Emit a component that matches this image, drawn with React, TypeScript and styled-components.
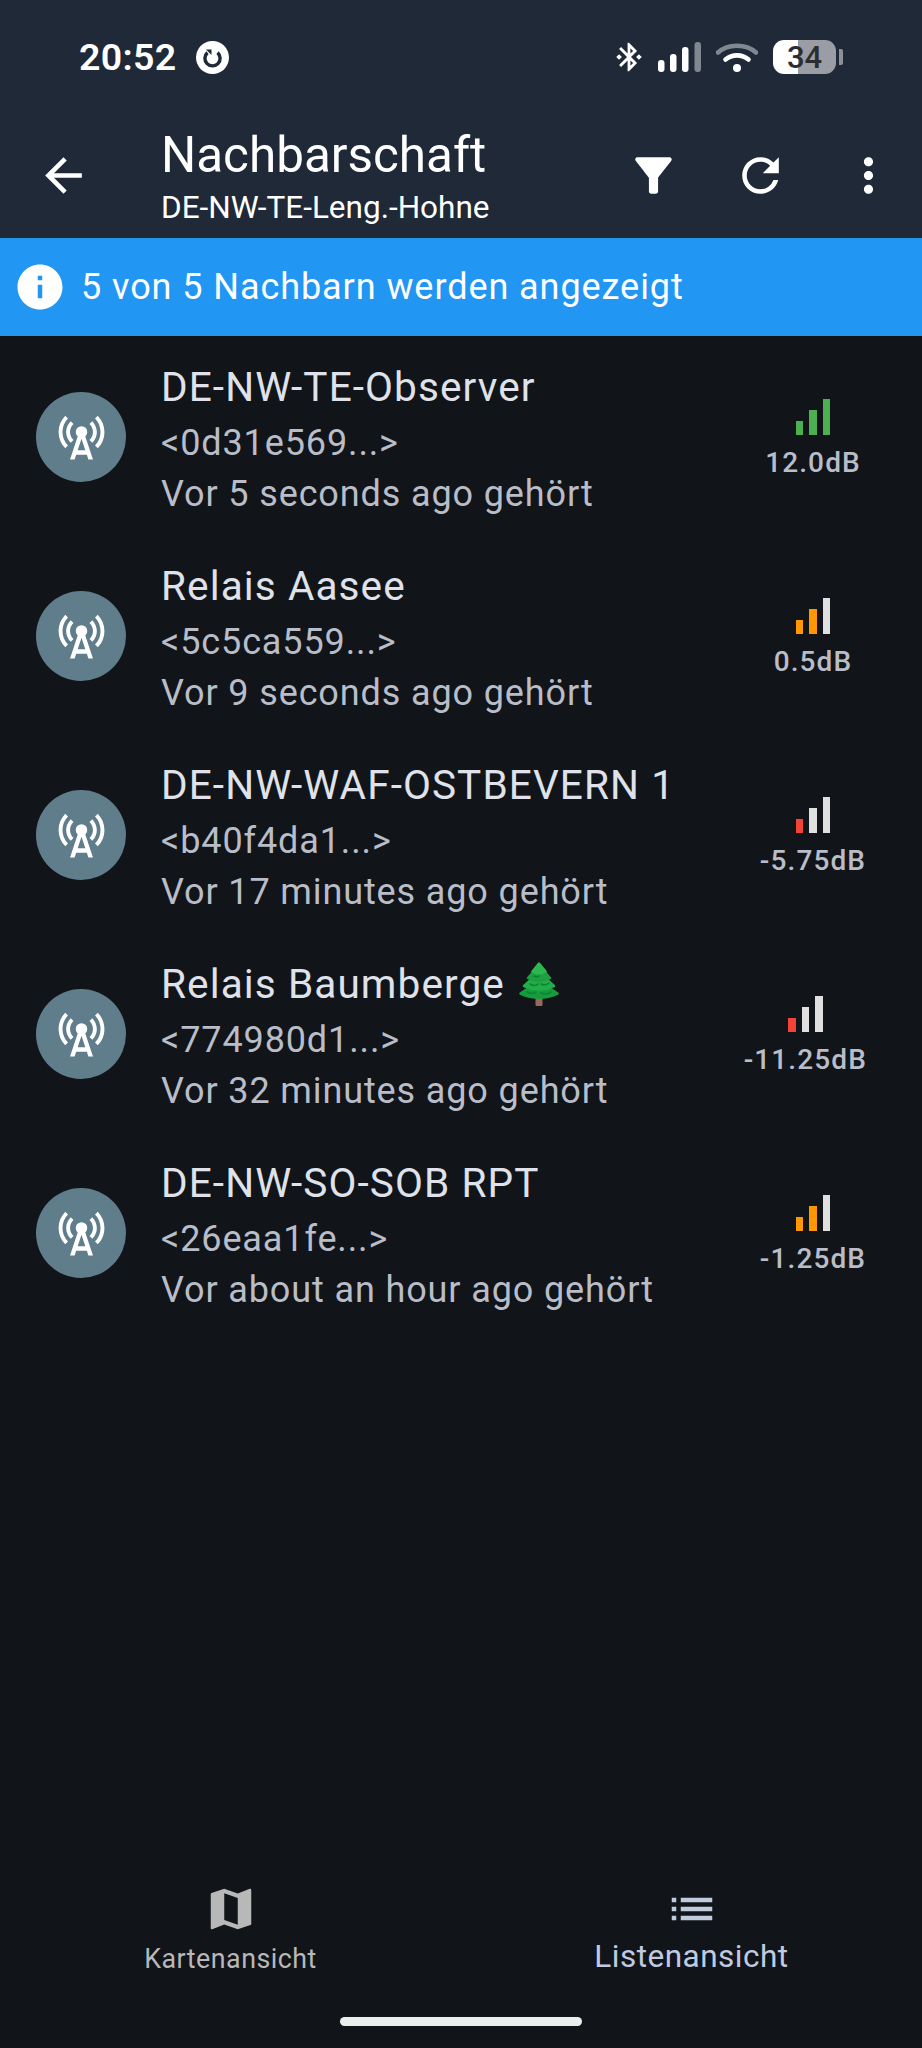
import React from "react";
import styled, { createGlobalStyle } from "styled-components";
import {
  MdArrowBack,
  MdBluetoothConnected,
  MdCellTower,
  MdFilterAlt,
  MdInfo,
  MdList,
  MdMap,
  MdMoreVert,
  MdRefresh,
} from "react-icons/md";

const GlobalStyle = createGlobalStyle`
  html, body { margin: 0; padding: 0; background: #111419; }
  body { font-family: Roboto, "Liberation Sans", sans-serif; }
`;

const Screen = styled.div`
  width: 922px;
  height: 2048px;
  display: flex;
  flex-direction: column;
  background: #111419;
  overflow: hidden;
`;

const Header = styled.header`
  height: 238px;
  background: #1f2937;
  display: flex;
  flex-direction: column;
  color: #fff;
`;

const StatusBar = styled.div`
  height: 112px;
  padding: 2px 79px 0;
  display: flex;
  align-items: center;
  justify-content: space-between;
  box-sizing: border-box;
`;

const StatusLeft = styled.div`
  display: flex;
  align-items: center;
  gap: 20px;
`;

const Clock = styled.span`
  font-size: 37.5px;
  font-weight: 600;
  letter-spacing: 0.3px;
`;

const StatusRight = styled.div`
  display: flex;
  align-items: center;
`;

const BluetoothGlyph = styled(MdBluetoothConnected)`
  font-size: 34px;
  margin-right: 12px;
`;

const Battery = styled.div`
  display: flex;
  align-items: center;
  margin-left: 15px;
`;

const BatteryBody = styled.div`
  width: 63px;
  height: 34px;
  border-radius: 11px;
  background: linear-gradient(to right, #fff 0 25px, #9a9da3 25px 100%);
  color: #2b2d31;
  font-size: 31px;
  font-weight: 500;
  display: flex;
  align-items: center;
  justify-content: center;
`;

const BatteryNub = styled.div`
  width: 4px;
  height: 16px;
  margin-left: 3px;
  background: #8d9197;
  border-radius: 0 2px 2px 0;
`;

const AppBar = styled.div`
  height: 126px;
  display: flex;
  align-items: flex-start;
`;

const BackSlot = styled.div`
  width: 126px;
  height: 126px;
  flex: none;
  display: flex;
  align-items: center;
  justify-content: center;
`;

const BackIcon = styled(MdArrowBack)`
  font-size: 55px;
`;

const Titles = styled.div`
  flex: 1;
  margin-left: 35px;
  display: flex;
  flex-direction: column;
`;

const Title = styled.div`
  font-size: 49.4px;
  line-height: 56px;
  margin-top: 15px;
`;

const Subtitle = styled.div`
  font-size: 31.5px;
  line-height: 36px;
  margin-top: 7px;
`;

const Actions = styled.div`
  display: flex;
  width: 322.5px;
  height: 126px;
  flex: none;
  align-items: center;
`;

const ActionSlot = styled.div`
  width: 107.5px;
  display: flex;
  justify-content: center;
`;

const Banner = styled.div`
  height: 98px;
  background: #2196f3;
  display: flex;
  align-items: center;
  color: #fff;
  padding-left: 13px;
  box-sizing: border-box;
`;

const BannerIcon = styled(MdInfo)`
  font-size: 54px;
  flex: none;
`;

const BannerText = styled.span`
  font-size: 36px;
  letter-spacing: 0.93px;
  margin-left: 14px;
`;

const List = styled.div`
  flex: 1;
  padding-top: 1px;
`;

const Row = styled.div`
  height: 199px;
  display: flex;
  align-items: center;
  padding: 0 55px 0 36px;
`;

const Avatar = styled.div`
  width: 90px;
  height: 90px;
  border-radius: 50%;
  background: #607d8b;
  color: #fff;
  flex: none;
  display: flex;
  align-items: center;
  justify-content: center;
`;

const RowText = styled.div`
  flex: 1;
  margin-left: 35px;
  display: flex;
  flex-direction: column;
  padding-top: 3px;
`;

const RowTitle = styled.div`
  font-size: 40.6px;
  line-height: 61px;
  letter-spacing: 1.08px;
  color: #dfe2ea;
  display: flex;
  align-items: center;
  gap: 14px;
`;

const RowLine = styled.div`
  font-size: 36px;
  line-height: 51px;
  letter-spacing: 0.88px;
  color: #b9bdc8;
`;

const SignalColumn = styled.div`
  min-width: 108px;
  flex: none;
  display: flex;
  flex-direction: column;
  align-items: center;
  margin-top: 5px;
`;

const Bars = styled.div`
  display: flex;
  align-items: flex-end;
  gap: 6px;
  height: 37px;
`;

const Bar = styled.div<{ $h: number; $color: string }>`
  width: 7.5px;
  height: ${(p) => p.$h}px;
  background: ${(p) => p.$color};
`;

const SignalLabel = styled.div`
  font-size: 28px;
  line-height: 34px;
  font-weight: 500;
  letter-spacing: 1.12px;
  color: #b9bdc8;
  margin-top: 11px;
  white-space: nowrap;
`;

const BottomNav = styled.nav`
  display: grid;
  grid-template-columns: 1fr 1fr;
  height: 130px;
`;

const NavItem = styled.div<{ $active?: boolean }>`
  display: flex;
  flex-direction: column;
  align-items: center;
  color: ${(p) => (p.$active ? "#c0cbe0" : "#b8b8b8")};
`;

const NavLabel = styled.span<{ $active?: boolean }>`
  font-size: ${(p) => (p.$active ? 31.5 : 26.8)}px;
  line-height: 36px;
  letter-spacing: 0.5px;
  margin-top: ${(p) => (p.$active ? 3 : 5)}px;
`;

const HomeBar = styled.div`
  height: 36px;
  display: flex;
  justify-content: center;
  padding-top: 5px;
  box-sizing: border-box;
`;

const HomePill = styled.div`
  width: 242px;
  height: 9px;
  border-radius: 5px;
  background: #eceeee;
`;

const SyncBadge = () => (
  <svg width="33" height="33" viewBox="0 0 33 33">
    <circle cx="16.5" cy="16.5" r="16.5" fill="#fff" />
    <path
      d="M11.5 11.6a7.6 7.6 0 1 0 10 0"
      fill="none"
      stroke="#1f2937"
      strokeWidth="3.4"
    />
    <path d="M10 8.5h5.5v5.5z" fill="#1f2937" />
  </svg>
);

const CellBars = () => (
  <svg width="43" height="30" viewBox="0 0 43 30">
    <rect x="0" y="18" width="6.5" height="12" rx="3" fill="#fff" />
    <rect x="12" y="12" width="6.5" height="18" rx="3" fill="#fff" />
    <rect x="24" y="5" width="6.5" height="25" rx="3" fill="#fff" />
    <rect x="36.5" y="0" width="6.5" height="30" rx="3" fill="#7f8791" />
  </svg>
);

const WifiIcon = styled.svg`
  margin-left: 15px;
`;

const WifiGlyph = () => (
  <WifiIcon width="42" height="30" viewBox="0 0 42 30">
    <path d="M2 10.5C12 1.5 30 1.5 40 10.5" fill="none" stroke="#7f8791" strokeWidth="4.6" strokeLinecap="round" />
    <path d="M9.5 17.5C16 12 26 12 32.5 17.5" fill="none" stroke="#fff" strokeWidth="4.6" strokeLinecap="round" />
    <circle cx="21" cy="26" r="4" fill="#fff" />
  </WifiIcon>
);

// Evergreen drawn in stacked, rounded tiers, widest at the bottom
const FirTree = () => (
  <svg width="40" height="44" viewBox="0 0 40 44">
    <rect x="16.5" y="34" width="7" height="10" rx="1" fill="#96695a" />
    <g strokeLinejoin="round" strokeWidth="2.5">
      <path d="M14 23 L1.500 31.500 Q20 40 38.500 31.500 L26 23z" fill="#169c3c" stroke="#169c3c" />
      <path d="M15 15 L5 24 Q20 31 35 24 L25 15z" fill="#22ad48" stroke="#22ad48" />
      <path d="M16 8 L9 16 Q20 22 31 16 L24 8z" fill="#1e9f42" stroke="#1e9f42" />
      <path d="M20 1.500 L13.500 9.500 Q20 13 26.500 9.500z" fill="#2cb84f" stroke="#2cb84f" />
    </g>
    <path d="M8 30q6 3 9 0M22 31q6 2 10-1M11 22q5 3 8 0M22 22q5 2 8-1M15 14q3 2 5 0" fill="none" stroke="#0c8430" strokeWidth="1.6" strokeLinecap="round" />
  </svg>
);

type Neighbour = {
  name: string;
  id: string;
  heard: string;
  snr: string;
  bars: [string, string, string];
  tree?: boolean;
};

const GREY = "#e0e0e0";
const GREEN = "#4caf50";
const ORANGE = "#ff9800";
const RED = "#f44336";

const neighbours: Neighbour[] = [
  { name: "DE-NW-TE-Observer", id: "<0d31e569...>", heard: "Vor 5 seconds ago gehört", snr: "12.0dB", bars: [GREEN, GREEN, GREEN] },
  { name: "Relais Aasee", id: "<5c5ca559...>", heard: "Vor 9 seconds ago gehört", snr: "0.5dB", bars: [ORANGE, ORANGE, GREY] },
  { name: "DE-NW-WAF-OSTBEVERN 1", id: "<b40f4da1...>", heard: "Vor 17 minutes ago gehört", snr: "-5.75dB", bars: [RED, GREY, GREY] },
  { name: "Relais Baumberge", id: "<774980d1...>", heard: "Vor 32 minutes ago gehört", snr: "-11.25dB", bars: [RED, GREY, GREY], tree: true },
  { name: "DE-NW-SO-SOB RPT", id: "<26eaa1fe...>", heard: "Vor about an hour ago gehört", snr: "-1.25dB", bars: [ORANGE, ORANGE, GREY] },
];

const BAR_HEIGHTS = [14, 25, 36];

export default function App() {
  return (
    <Screen>
      <GlobalStyle />
      <Header>
        <StatusBar>
          <StatusLeft>
            <Clock>20:52</Clock>
            <SyncBadge />
          </StatusLeft>
          <StatusRight>
            <BluetoothGlyph />
            <CellBars />
            <WifiGlyph />
            <Battery>
              <BatteryBody>34</BatteryBody>
              <BatteryNub />
            </Battery>
          </StatusRight>
        </StatusBar>
        <AppBar>
          <BackSlot>
            <BackIcon />
          </BackSlot>
          <Titles>
            <Title>Nachbarschaft</Title>
            <Subtitle>DE-NW-TE-Leng.-Hohne</Subtitle>
          </Titles>
          <Actions>
            <ActionSlot><MdFilterAlt size={55} /></ActionSlot>
            <ActionSlot><MdRefresh size={55} /></ActionSlot>
            <ActionSlot><MdMoreVert size={55} /></ActionSlot>
          </Actions>
        </AppBar>
      </Header>
      <Banner>
        <BannerIcon />
        <BannerText>5 von 5 Nachbarn werden angezeigt</BannerText>
      </Banner>
      <List>
        {neighbours.map((n) => (
          <Row key={n.id}>
            <Avatar><MdCellTower size={55} /></Avatar>
            <RowText>
              <RowTitle>
                {n.name}
                {n.tree && <FirTree />}
              </RowTitle>
              <RowLine>{n.id}</RowLine>
              <RowLine>{n.heard}</RowLine>
            </RowText>
            <SignalColumn>
              <Bars>
                {n.bars.map((c, i) => (
                  <Bar key={i} $h={BAR_HEIGHTS[i]} $color={c} />
                ))}
              </Bars>
              <SignalLabel>{n.snr}</SignalLabel>
            </SignalColumn>
          </Row>
        ))}
      </List>
      <BottomNav>
        <NavItem>
          <MdMap size={54} />
          <NavLabel>Kartenansicht</NavLabel>
        </NavItem>
        <NavItem $active>
          <MdList size={54} />
          <NavLabel $active>Listenansicht</NavLabel>
        </NavItem>
      </BottomNav>
      <HomeBar>
        <HomePill />
      </HomeBar>
    </Screen>
  );
}
